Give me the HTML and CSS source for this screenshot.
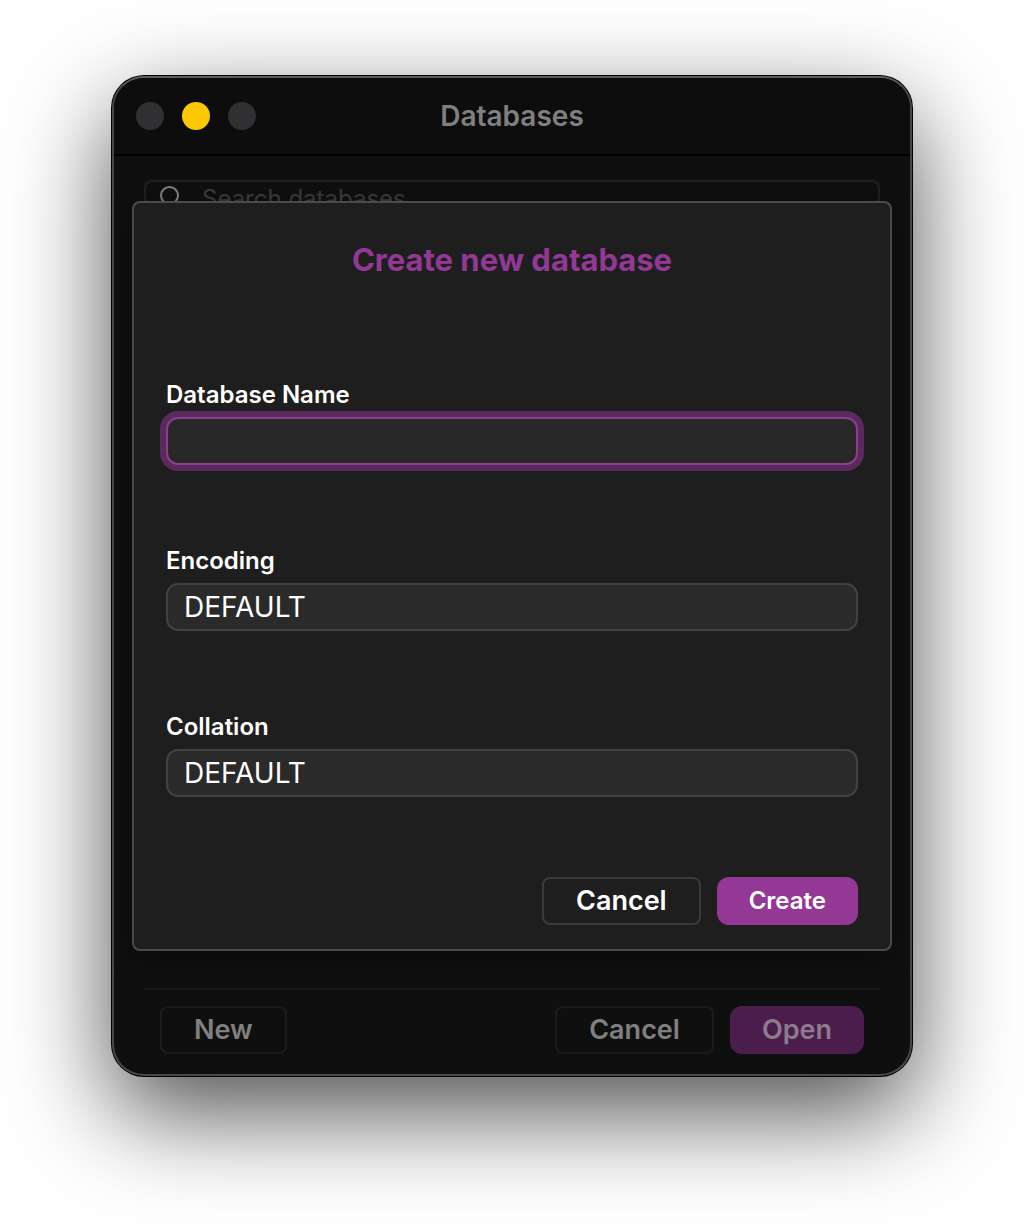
FILE: index.html
```html
<!DOCTYPE html>
<html lang="en">
<head>
    <meta charset="UTF-8">
    <meta name="viewport" content="width=device-width, initial-scale=1.0">
    <title>Databases</title>
    <link rel="stylesheet" href="styles.css">
</head>
<body>
    <main class="window">
        <header class="titlebar">
            <div class="traffic-lights">
                <button type="button" class="light" aria-label="Close"></button>
                <button type="button" class="light minimize" aria-label="Minimize"></button>
                <button type="button" class="light" aria-label="Zoom"></button>
            </div>
            <h1>Databases</h1>
        </header>

        <div class="content">
            <div class="search">
                <svg class="search-icon" viewBox="0 0 24 24" fill="none" stroke="currentColor" stroke-width="2" stroke-linecap="round" aria-hidden="true">
                    <circle cx="9.5" cy="9.5" r="8.5"/>
                    <path d="M15.5 15.5L22 22"/>
                </svg>
                <input type="search" aria-label="Search databases" placeholder="Search databases">
            </div>

            <footer class="footer">
                <button type="button" class="btn">New</button>
                <div class="actions">
                    <button type="button" class="btn">Cancel</button>
                    <button type="button" class="btn btn-primary">Open</button>
                </div>
            </footer>
        </div>

        <form class="sheet">
            <h2>Create new database</h2>
            <div class="fields">
                <div class="field">
                    <label for="name">Database Name</label>
                    <input type="text" id="name" name="name" class="control focused">
                </div>
                <div class="field">
                    <label for="encoding">Encoding</label>
                    <select id="encoding" name="encoding" class="control">
                        <option>DEFAULT</option>
                    </select>
                </div>
                <div class="field">
                    <label for="collation">Collation</label>
                    <select id="collation" name="collation" class="control">
                        <option>DEFAULT</option>
                    </select>
                </div>
            </div>
            <div class="actions">
                <button type="button" class="btn">Cancel</button>
                <button type="submit" class="btn btn-primary btn-create">Create</button>
            </div>
        </form>
    </main>
</body>
</html>
```

FILE: styles.css
```css
* {
    box-sizing: border-box;
}

body {
    margin: 0;
    padding: 76px 112px 148px;
    background-color: #fff;
    font-family: Inter, "Liberation Sans", sans-serif;
}

button, input, select {
    font: inherit;
    color: inherit;
}

h1, h2 {
    margin: 0;
    font-weight: 600;
    text-align: center;
}

.window {
    position: relative;
    display: flex;
    flex-direction: column;
    min-height: calc(100vh - 224px);
    border: 2px solid #484848;
    border-top-color: #5c5e5c;
    border-radius: 32px;
    background-color: #0f0f0f;
    color: #808080;
    box-shadow: 0 0 0 1px #000, 0 36px 100px rgba(0, 0, 0, 0.7);
}

/* Title bar */
.titlebar {
    display: grid;
    grid-template-columns: 1fr auto 1fr;
    align-items: center;
    height: 78px;
    padding: 0 22px;
    border-bottom: 2px solid #000;
    border-radius: 30px 30px 0 0;
    background-color: #0d0d0e;
}

.titlebar h1 {
    font-size: 28px;
    line-height: 32px;
}

.traffic-lights {
    display: flex;
    gap: 18px;
}

.light {
    width: 28px;
    height: 28px;
    padding: 0;
    border: 0;
    border-radius: 50%;
    background-color: #303032;
}

.minimize {
    background-color: #fcc804;
}

/* Database list, behind the sheet */
.content {
    flex: 1;
    display: flex;
    flex-direction: column;
    justify-content: space-between;
    padding: 24px 30px 20px;
}

.search {
    display: flex;
    align-items: flex-start;
    gap: 18px;
    height: 48px;
    padding: 4px 14px;
    border: 2px solid #202020;
    border-radius: 8px;
}

.search-icon {
    width: 24px;
    height: 24px;
}

.search input {
    flex: 1;
    height: 24px;
    padding: 0;
    border: 0;
    background: none;
    font-size: 24px;
}

.search input::placeholder {
    color: #3a3a3a;
}

.footer {
    display: flex;
    justify-content: space-between;
    padding: 16px 16px 0;
    border-top: 2px solid #1b1b1b;
}

/* Buttons */
.actions {
    display: flex;
    justify-content: flex-end;
    gap: 16px;
}

.btn {
    height: 48px;
    padding: 0 32px;
    border: 2px solid #1c1c1c;
    border-radius: 8px;
    background: none;
    font-size: 27px;
    font-weight: 600;
    line-height: 32px;
}

.btn-primary {
    border: 0;
    border-radius: 12px;
    background-color: #4a1d4d;
    color: #8c7c8d;
}

/* Create sheet */
.sheet {
    position: absolute;
    top: 123px;
    right: 18px;
    left: 18px;
    padding: 38px 32px 24px;
    border: 2px solid #4b4b4b;
    border-radius: 8px;
    background-color: #1e1e1e;
    color: #fff;
    box-shadow: 0 8px 24px rgba(0, 0, 0, 0.3);
}

.sheet h2 {
    color: #943896;
    font-size: 31px;
    font-weight: 700;
    line-height: 38px;
}

.fields {
    display: flex;
    flex-direction: column;
    gap: 80px;
    padding: 100px 0 80px;
}

.field {
    display: flex;
    flex-direction: column;
    gap: 6px;
}

.field label {
    font-size: 24px;
    font-weight: 600;
    line-height: 32px;
}

.control {
    appearance: none;
    width: 100%;
    height: 48px;
    padding: 0 16px;
    border: 2px solid #414141;
    border-radius: 12px;
    background-color: #2a2a2a;
    font-size: 28px;
}

.control.focused,
.control:focus {
    border-color: #8b408f;
    outline: none;
    background-color: #282828;
    box-shadow: 0 0 0 6px #5b2a5d;
}

.sheet .btn {
    border-color: #3a3a3a;
}

.sheet .btn-primary {
    background-color: #943896;
    color: #fff;
}

.sheet .btn-create {
    font-size: 24px;
}
```
